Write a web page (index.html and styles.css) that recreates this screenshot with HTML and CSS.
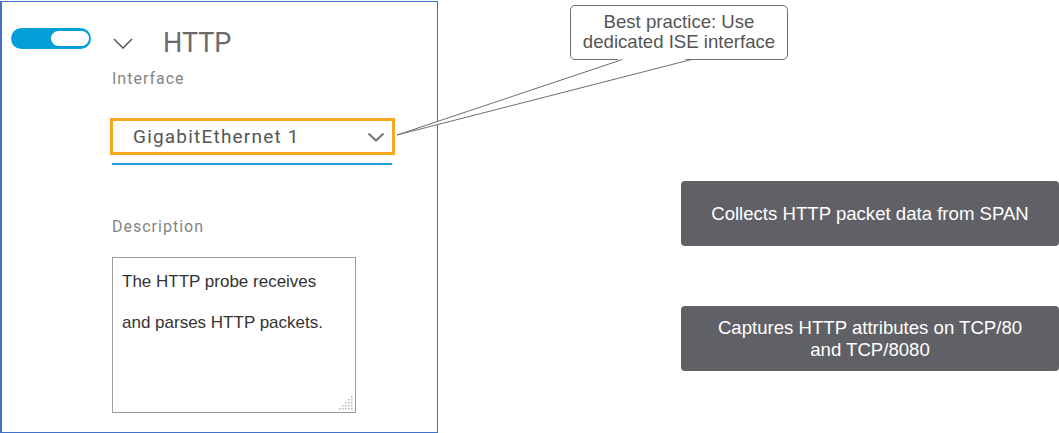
FILE: index.html
```html
<!DOCTYPE html>
<html>
<head>
<meta charset="utf-8">
<link rel="stylesheet" href="styles.css">
</head>
<body>
<div class="page">
  <section class="panel">
    <div class="header">
      <div class="toggle"><span class="knob"></span></div>
      <svg class="chev" width="20" height="11" viewBox="0 0 20 11"><polyline points="1,1 10,10 19,1" fill="none" stroke="#5a5a5a" stroke-width="1.6"/></svg>
      <h1 class="title">HTTP</h1>
    </div>
    <div class="fields">
      <div class="label">Interface</div>
      <div class="select">
        <span class="select-text">GigabitEthernet 1</span>
        <svg width="18" height="10" viewBox="0 0 18 10"><polyline points="1.5,1.5 9,8.5 16.5,1.5" fill="none" stroke="#7a7a7a" stroke-width="2.2"/></svg>
      </div>
      <div class="underline"></div>
      <div class="label label-desc">Description</div>
      <div class="textarea">
        <p class="ta-line">The HTTP probe receives</p>
        <p class="ta-line">and parses HTTP packets.</p>
        <svg class="grip" width="18" height="18" viewBox="0 0 18 18">
          <g fill="#b8b8b8">
            <rect x="15" y="3" width="1.5" height="1.5"/>
            <rect x="12" y="6" width="1.5" height="1.5"/><rect x="15" y="6" width="1.5" height="1.5"/>
            <rect x="9" y="9" width="1.5" height="1.5"/><rect x="12" y="9" width="1.5" height="1.5"/><rect x="15" y="9" width="1.5" height="1.5"/>
            <rect x="6" y="12" width="1.5" height="1.5"/><rect x="9" y="12" width="1.5" height="1.5"/><rect x="12" y="12" width="1.5" height="1.5"/><rect x="15" y="12" width="1.5" height="1.5"/>
            <rect x="3" y="15" width="1.5" height="1.5"/><rect x="6" y="15" width="1.5" height="1.5"/><rect x="9" y="15" width="1.5" height="1.5"/><rect x="12" y="15" width="1.5" height="1.5"/><rect x="15" y="15" width="1.5" height="1.5"/>
          </g>
        </svg>
      </div>
    </div>
  </section>
  <aside class="side">
    <div class="note">Collects HTTP packet data from SPAN</div>
    <div class="note">Captures HTTP attributes on TCP/80<br>and TCP/8080</div>
  </aside>
  <div class="callout">Best practice: Use<br>dedicated ISE interface</div>
  <svg class="tail" width="1059" height="433" viewBox="0 0 1059 433">
    <polygon points="622.5,58 397,135 691.5,58" fill="#fff" stroke="none"/>
    <polyline points="622.5,59.5 397,135 691.5,59.5" fill="none" stroke="#6e6e6e" stroke-width="1"/>
  </svg>
</div>
</body>
</html>
```

FILE: styles.css
```css
* { box-sizing: border-box; }
html, body { margin: 0; padding: 0; background: #fff; }
body { font-family: "Liberation Sans", Arial, sans-serif; }

.page {
  position: relative;
  width: 1059px;
  height: 433px;
  display: flex;
  align-items: flex-start;
  overflow: hidden;
}

.panel {
  width: 438px;
  height: 432px;
  margin-top: 1px;
  border: 1px solid #4472c4;
  border-left-width: 2px;
  padding: 26px 0 0 9px;
  flex-shrink: 0;
  font-family: Roboto, "Liberation Sans", sans-serif;
}

.header {
  display: flex;
  align-items: flex-start;
  height: 22px;
}
.toggle {
  width: 80px;
  height: 21px;
  border-radius: 11px;
  background: #049fd9;
  display: flex;
  align-items: center;
  justify-content: flex-end;
  padding-right: 2px;
}
.knob {
  width: 38px;
  height: 15px;
  border-radius: 8px;
  background: #fff;
}
.chev { margin: 10px 0 0 22px; flex-shrink: 0; }
.title {
  margin: 2px 0 0 30px;
  font-size: 27px;
  line-height: 27px;
  font-weight: 400;
  color: #6a6a6a;
}

.fields {
  margin-left: 101px;
  display: flex;
  flex-direction: column;
  align-items: flex-start;
}
.label {
  margin-top: 19px;
  font-size: 16px;
  line-height: 20px;
  letter-spacing: 1px;
  color: #858585;
}
.select {
  margin: 29px 0 0 -2px;
  width: 285px;
  height: 37px;
  border: 3px solid #f7a823;
  display: flex;
  align-items: center;
  justify-content: space-between;
  padding: 0 7px 0 20px;
}
.select-text {
  font-size: 19px;
  letter-spacing: 1.2px;
  color: #555;
}
.underline {
  margin-top: 8px;
  width: 280px;
  height: 2px;
  background: #1aa1da;
}
.label-desc { margin-top: 52px; }

.textarea {
  position: relative;
  margin-top: 20px;
  width: 244px;
  height: 156px;
  border: 1px solid #9d9d9d;
  padding: 3px 0 0 9px;
  font-family: "Liberation Sans", Arial, sans-serif;
}
.ta-line {
  margin: 0;
  font-size: 17px;
  line-height: 41px;
  color: #333;
}
.grip { position: absolute; right: 1px; bottom: 1px; }

.side {
  display: flex;
  flex-direction: column;
  gap: 60px;
  padding: 181px 0 0 243px;
}
.note {
  width: 378px;
  height: 65px;
  background: #606166;
  border-radius: 4px;
  color: #fff;
  font-size: 18.6px;
  line-height: 22px;
  text-align: center;
  display: flex;
  align-items: center;
  justify-content: center;
}

.callout {
  position: absolute;
  left: 570px;
  top: 5px;
  width: 218px;
  height: 55px;
  border: 1px solid #6e6e6e;
  border-radius: 5px;
  background: #fff;
  color: #555;
  font-size: 18.6px;
  line-height: 20px;
  text-align: center;
  padding-top: 6px;
}
.tail {
  position: absolute;
  left: 0;
  top: 0;
  pointer-events: none;
}
```
